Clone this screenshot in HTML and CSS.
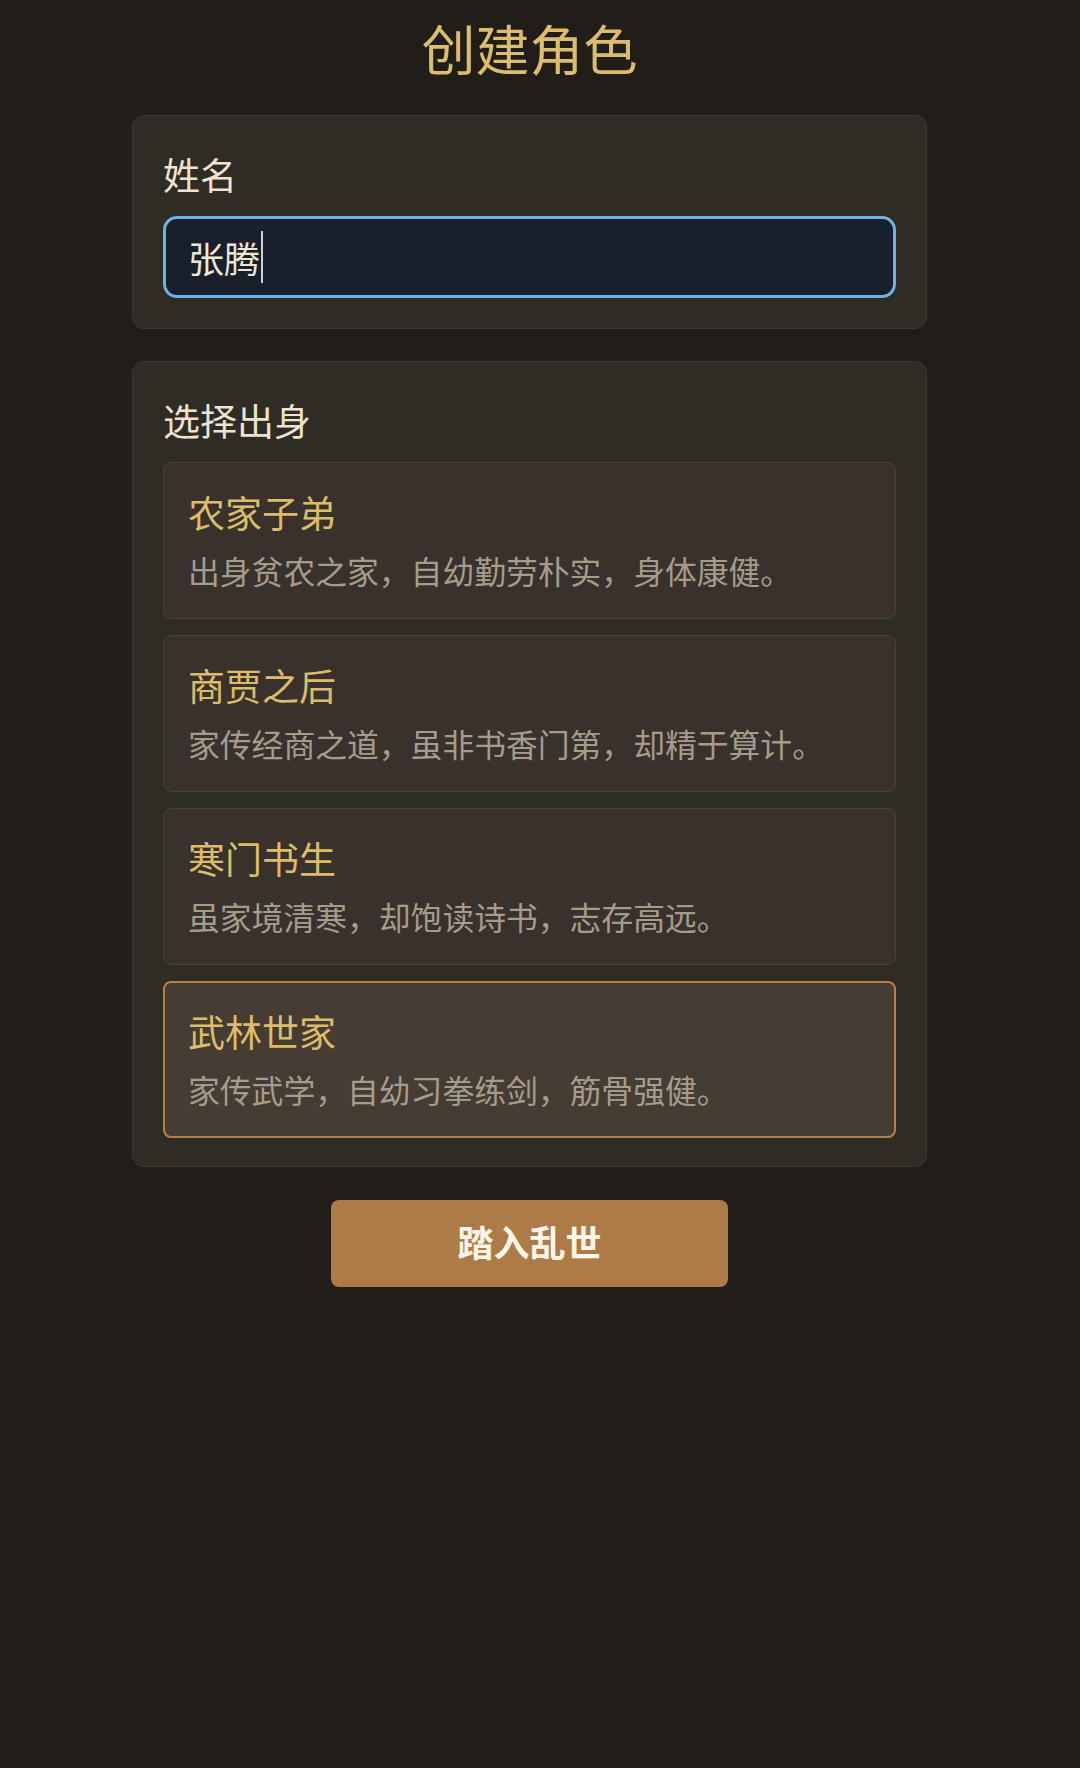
FILE: index.html
```html
<!DOCTYPE html>
<html lang="zh-CN">
<head>
<meta charset="utf-8">
<title>创建角色</title>
<link rel="stylesheet" href="styles.css">
</head>
<body>
<main class="page">
  <h1 class="page-title">创建角色</h1>

  <section class="panel">
    <div class="panel-label">姓名</div>
    <div class="name-input" role="textbox" aria-label="姓名"><span class="name-value">张腾</span><span class="caret"></span></div>
  </section>

  <section class="panel">
    <div class="panel-label">选择出身</div>
    <div class="options">
      <div class="option">
        <div class="option-title">农家子弟</div>
        <div class="option-desc">出身贫农之家，自幼勤劳朴实，身体康健。</div>
      </div>
      <div class="option">
        <div class="option-title">商贾之后</div>
        <div class="option-desc">家传经商之道，虽非书香门第，却精于算计。</div>
      </div>
      <div class="option">
        <div class="option-title">寒门书生</div>
        <div class="option-desc">虽家境清寒，却饱读诗书，志存高远。</div>
      </div>
      <div class="option selected">
        <div class="option-title">武林世家</div>
        <div class="option-desc">家传武学，自幼习拳练剑，筋骨强健。</div>
      </div>
    </div>
  </section>

  <div class="actions">
    <button class="start-btn" type="button">踏入乱世</button>
  </div>
</main>
</body>
</html>
```

FILE: styles.css
```css
* {
  box-sizing: border-box;
}

html, body {
  margin: 0;
  padding: 0;
}

body {
  background: #211d19;
  min-height: 1768px;
  padding-right: 21px;
  font-family: "Noto Sans CJK SC", "Noto Sans", sans-serif;
}

.page {
  width: 795px;
  margin: 0 auto;
  display: flex;
  flex-direction: column;
}

.page-title {
  margin: 15px 0 35px;
  text-align: center;
  font-size: 54px;
  line-height: 65px;
  font-weight: 400;
  color: #dcbc6e;
}

.panel {
  background: #2f2b25;
  border: 1px solid #3e3831;
  border-radius: 12px;
  padding: 30px 30px 28px;
  margin-bottom: 32px;
}

.panel-label {
  font-size: 37px;
  line-height: 56px;
  color: #ede3cf;
  margin-bottom: 14px;
}

.name-input {
  height: 82px;
  border: 3px solid #6ab4e6;
  border-radius: 14px;
  background: #18202b;
  padding: 0 22px;
  display: flex;
  align-items: center;
  font-size: 36px;
  color: #efe6d6;
  margin-bottom: 2px;
}

.caret {
  display: inline-block;
  width: 2px;
  height: 52px;
  background: #c9d2dc;
  margin-left: 1px;
}

.options {
  display: flex;
  flex-direction: column;
  gap: 16px;
}

.option {
  background: #39322c;
  border: 1px solid #4a423a;
  border-radius: 8px;
  padding: 21px 24px 27px;
}

.option.selected {
  background: #453c33;
  border: 2px solid #b5804a;
  padding: 20px 23px 26px;
}

.option-title {
  font-size: 37px;
  line-height: 56px;
  color: #dcbc6a;
}

.option-desc {
  margin-top: 9px;
  font-size: 31.8px;
  line-height: 42px;
  color: #a69c8c;
}

.actions {
  display: flex;
  justify-content: center;
  margin-top: 1px;
}

.start-btn {
  width: 397px;
  height: 87px;
  border: none;
  border-radius: 8px;
  background: #ad7b47;
  color: #fdf6e8;
  font-family: "Noto Sans CJK SC", "Noto Sans", sans-serif;
  font-size: 36px;
  font-weight: 700;
  padding: 0 0 6px;
  cursor: pointer;
}
```
